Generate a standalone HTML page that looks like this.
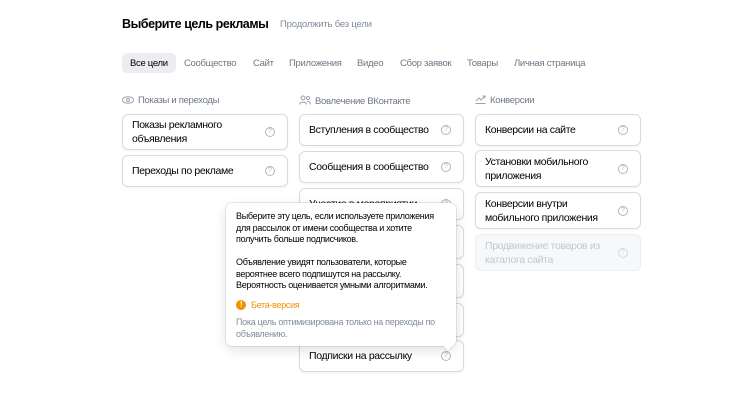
<html><head><style>
body{margin:0;width:751px;height:414px;background:#fff;font-family:"Liberation Sans",sans-serif;position:relative;overflow:hidden;color:#000}
.a{position:absolute;white-space:nowrap}
h1{position:absolute;left:122px;top:17px;margin:0;font-size:12.5px;font-weight:bold;letter-spacing:-0.45px}
.skip{left:280px;top:19px;font-size:9.5px;color:#818c99;letter-spacing:-0.2px}
.tab{top:58px;font-size:9.5px;color:#6d7885;letter-spacing:-0.3px}
.pill{left:122px;top:53px;width:54px;height:20px;background:#ebedf0;border-radius:5px}
.hd{top:95px;font-size:9.5px;color:#6d7885;letter-spacing:-0.3px}
.c{position:absolute;border:1px solid #d7dbe0;border-radius:6px;background:#fff;font-size:10.5px;letter-spacing:-0.35px;color:#000;box-sizing:border-box;padding:0 26px 0 9px;display:flex;align-items:center;line-height:14px;box-shadow:0 1px 2px rgba(0,0,0,.05)}
.c:after{content:"?";position:absolute;right:12px;top:50%;margin-top:-5px;width:8px;height:8px;border:1px solid #aeb7c2;border-radius:50%;font-size:7px;line-height:8px;text-align:center;color:#aeb7c2;letter-spacing:0}
.dis{color:#c4c8cc;background:#f7f8fa;border-color:#eceef1;box-shadow:none}
.dis:after{border-color:#d5d9dd;color:#d5d9dd}
.tt{left:226px;top:203px;width:230px;height:143px;box-sizing:border-box;background:#fff;border-radius:6px;box-shadow:0 0 0 1px rgba(0,0,0,.08),0 4px 12px rgba(0,0,0,.12);padding:8px 8px 8px 10px;font-size:9px;letter-spacing:-0.3px;line-height:11.5px;color:#000;white-space:normal}
</style></head><body>
<h1>Выберите цель рекламы</h1>
<div class="a skip">Продолжить без цели</div>
<div class="a pill"></div>
<div class="a tab" style="left:130px;color:#000">Все цели</div>
<div class="a tab" style="left:184px">Сообщество</div>
<div class="a tab" style="left:253px">Сайт</div>
<div class="a tab" style="left:289px">Приложения</div>
<div class="a tab" style="left:357px">Видео</div>
<div class="a tab" style="left:400px">Сбор заявок</div>
<div class="a tab" style="left:467px">Товары</div>
<div class="a tab" style="left:514px">Личная страница</div>
<div class="a hd" style="left:122px"><svg width="12" height="8" style="vertical-align:-1px;margin-right:4px"><ellipse cx="6" cy="4" rx="5.5" ry="3.3" fill="none" stroke="#99a2ad"/><circle cx="6" cy="4" r="1.5" fill="none" stroke="#99a2ad"/></svg>Показы и переходы</div>
<div class="a hd" style="left:299px"><svg width="12" height="10" style="vertical-align:-1px;margin-right:4px"><circle cx="4" cy="3" r="2" fill="none" stroke="#99a2ad"/><circle cx="9" cy="3" r="1.6" fill="none" stroke="#99a2ad"/><path d="M0.5 9.5c0-3 7-3 7 0M8 6.5c2 0 3.5 1 3.5 3" fill="none" stroke="#99a2ad"/></svg>Вовлечение ВКонтакте</div>
<div class="a hd" style="left:475px"><svg width="11" height="9" style="vertical-align:-1px;margin-right:4px"><path d="M0.5 8.5h10M1 6l3-3 2 2 4-4M7.5 1h2.5v2.5" fill="none" stroke="#99a2ad"/></svg>Конверсии</div>

<div class="c" style="left:122px;top:114px;width:166px;height:36px">Показы рекламного объявления</div>
<div class="c" style="left:122px;top:155px;width:166px;height:32px">Переходы по рекламе</div>

<div class="c" style="left:299px;top:114px;width:165px;height:32px">Вступления в сообщество</div>
<div class="c" style="left:299px;top:151px;width:165px;height:32px">Сообщения в сообщество</div>
<div class="c" style="left:299px;top:188px;width:165px;height:32px">Участие в мероприятии</div>
<div class="c" style="left:299px;top:225px;width:165px;height:34px"></div>
<div class="c" style="left:299px;top:264px;width:165px;height:34px"></div>
<div class="c" style="left:299px;top:303px;width:165px;height:34px"></div>
<div class="c" style="left:299px;top:340px;width:165px;height:32px">Подписки на рассылку</div>

<div class="c" style="left:475px;top:114px;width:166px;height:32px">Конверсии на сайте</div>
<div class="c" style="left:475px;top:150px;width:166px;height:37px">Установки мобильного приложения</div>
<div class="c" style="left:475px;top:192px;width:166px;height:37px">Конверсии внутри мобильного приложения</div>
<div class="c dis" style="left:475px;top:234px;width:166px;height:37px">Продвижение товаров из каталога сайта</div>

<div class="a tt">Выберите эту цель, если используете приложения для рассылок от имени сообщества и хотите получить больше подписчиков.<br><br>Объявление увидят пользователи, которые вероятнее всего подпишутся на рассылку. Вероятность оценивается умными алгоритмами.<div style="margin-top:8px;color:#f29100;display:flex;align-items:center"><span style="display:inline-block;width:10px;height:10px;border-radius:50%;background:#f29100;color:#fff;font-size:8px;line-height:10px;text-align:center;font-weight:bold;margin-right:5px">!</span>Бета-версия</div><div style="margin-top:6px;color:#818c99">Пока цель оптимизирована только на переходы по объявлению.</div></div>
<div class="a" style="left:444px;top:341px;width:8px;height:8px;background:#fff;transform:rotate(45deg);box-shadow:1px 1px 0 rgba(0,0,0,.08)"></div>
</body></html>
